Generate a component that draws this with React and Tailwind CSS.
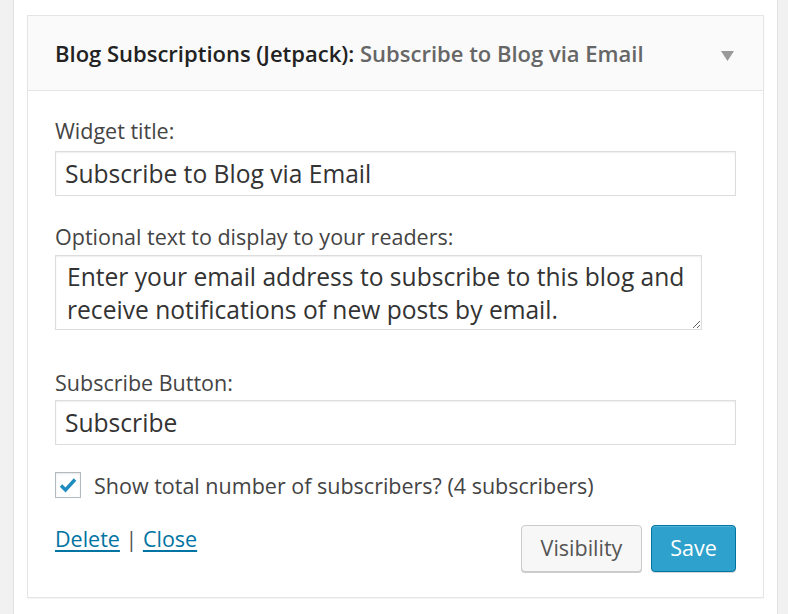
import { useState } from "react";

const font = { fontFamily: "'Open Sans', 'Noto Sans', sans-serif" };

const Field = ({ value }) => (
  <input
    type="text"
    defaultValue={value}
    className="block w-full h-[45px] border border-[#dddddd] bg-white pl-[9px] text-[24.6px] text-[#333] shadow-[inset_0_1px_2px_rgba(0,0,0,0.07)] outline-none"
  />
);

export default function App() {
  const [checked, setChecked] = useState(true);

  return (
    <div className="min-h-screen bg-[#f1f1f1] pl-[13px] pr-[10px]" style={font}>
      <div className="min-h-screen bg-white border-x border-[#e2e2e2] px-[13px] pt-[15px]">
        <div className="border border-[#e5e5e5] bg-white shadow-[0_1px_1px_rgba(0,0,0,0.04)]">
          {/* header */}
          <div className="flex items-center justify-between h-[75px] bg-[#fafafa] border-b border-[#e5e5e5] pl-[27px] pr-[29px]">
            <h3 className="text-[22px] font-semibold text-[#222] whitespace-nowrap">
              Blog Subscriptions (Jetpack):
              <span className="text-[#666]"> Subscribe to Blog via Email</span>
            </h3>
            <svg width="13" height="10" viewBox="0 0 13 10" className="mt-[6px]">
              <path d="M0 0h13L6.5 10z" fill="#999" />
            </svg>
          </div>

          {/* body */}
          <div className="px-[27px] pt-[26px] pb-[25px] text-[21.5px] text-[#444]">
            <label className="block leading-[28px]">Widget title:</label>
            <div className="mt-[6px]">
              <Field value="Subscribe to Blog via Email" />
            </div>

            <label className="block leading-[28px] mt-[27px]">
              Optional text to display to your readers:
            </label>
            <textarea
              defaultValue={
                "Enter your email address to subscribe to this blog and\nreceive notifications of new posts by email."
              }
              className="block mt-[4px] w-[647px] h-[75px] border border-[#dddddd] bg-white pl-[11px] pt-[4px] text-[24.6px] leading-[33px] text-[#333] shadow-[inset_0_1px_2px_rgba(0,0,0,0.07)] outline-none resize overflow-hidden whitespace-pre"
            />

            <label className="block leading-[28px] mt-[39px]">Subscribe Button:</label>
            <div className="mt-[3px]">
              <Field value="Subscribe" />
            </div>

            <div className="flex items-center mt-[27px] h-[26px]">
              <button
                type="button"
                onClick={() => setChecked(!checked)}
                className="flex items-center justify-center w-[26px] h-[26px] border border-[#b4b9be] bg-white shadow-[inset_0_1px_2px_rgba(0,0,0,0.1)]"
              >
                {checked && (
                  <svg width="18" height="16" viewBox="0 0 18 16">
                    <path d="M2 8.5l4.5 4.5L16 2.5" fill="none" stroke="#1e8cbe" strokeWidth="3.4" />
                  </svg>
                )}
              </button>
              <span className="ml-[13px] leading-[28px] mt-[2px]">
                Show total number of subscribers? (4 subscribers)
              </span>
            </div>

            <div className="flex items-start justify-between mt-[27px]">
              <div className="leading-[28px]">
                <a href="#" className="text-[#0074a2] underline underline-offset-[3px]">Delete</a>
                <span className="text-[#555]"> | </span>
                <a href="#" className="text-[#0074a2] underline underline-offset-[3px]">Close</a>
              </div>
              <div className="flex gap-[9px]">
                <button
                  type="button"
                  className="w-[121px] h-[47px] rounded-[4px] border border-[#cccccc] bg-[#f7f7f7] text-[#555] shadow-[0_1px_0_#cccccc]"
                >
                  Visibility
                </button>
                <button
                  type="button"
                  className="w-[85px] h-[47px] rounded-[4px] border border-[#0074a2] bg-[#2ea2cc] text-white shadow-[inset_0_1px_0_rgba(120,200,230,0.5),0_1px_0_rgba(0,0,0,0.15)]"
                >
                  Save
                </button>
              </div>
            </div>
          </div>
        </div>
      </div>
    </div>
  );
}
